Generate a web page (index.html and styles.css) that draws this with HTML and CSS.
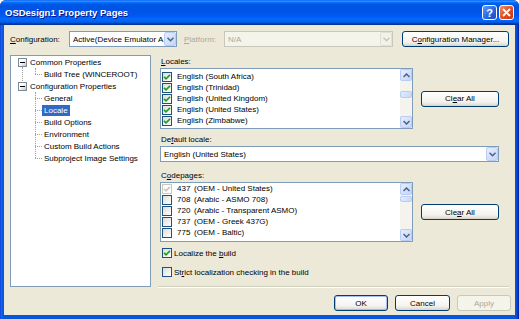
FILE: index.html
```html
<!DOCTYPE html>
<html lang="en">
<head>
    <meta charset="UTF-8">
    <title>OSDesign1 Property Pages</title>
    <link rel="stylesheet" href="styles.css">
</head>
<body>
    <div class="window">
        <div class="titlebar">
            <span class="title">OSDesign1 Property Pages</span>
            <div class="caption-btns">
                <span class="cap-btn help">?</span>
                <span class="cap-btn close">
                    <svg width="9" height="9" viewBox="0 0 9 9"><path d="M1 1 L8 8 M8 1 L1 8" stroke="#fff" stroke-width="1.8"/></svg>
                </span>
            </div>
        </div>

        <div class="client">
            <div class="config-row">
                <span class="lbl cfg-lbl"><u>C</u>onfiguration:</span>
                <div class="combo cfg-combo">
                    <span class="combo-text">Active(Device Emulator A</span>
                    <span class="combo-arrow"><svg width="7" height="5" viewBox="0 0 7 5"><path d="M0.5 0.8 L3.5 3.8 L6.5 0.8" fill="none" stroke="#4D6185" stroke-width="1.5"/></svg></span>
                </div>
                <span class="lbl plat-lbl disabled"><u>P</u>latform:</span>
                <div class="combo plat-combo disabled">
                    <span class="combo-text">N/A</span>
                    <span class="combo-arrow"><svg width="7" height="5" viewBox="0 0 7 5"><path d="M0.5 0.8 L3.5 3.8 L6.5 0.8" fill="none" stroke="#C9C7BA" stroke-width="1.5"/></svg></span>
                </div>
                <button class="btn mgr-btn">C<u>o</u>nfiguration Manager...</button>
            </div>

            <div class="main">
                <ul class="tree">
                    <li class="node first">
                        <div class="row root"><span class="expander"></span><span class="item">Common Properties</span></div>
                        <ul class="children">
                            <li class="row child"><span class="stub"></span><span class="item">Build Tree (WINCEROOT)</span></li>
                        </ul>
                    </li>
                    <li class="node">
                        <div class="row root"><span class="expander"></span><span class="item">Configuration Properties</span></div>
                        <ul class="children">
                            <li class="row child"><span class="stub"></span><span class="item">General</span></li>
                            <li class="row child"><span class="stub"></span><span class="item selected">Locale</span></li>
                            <li class="row child"><span class="stub"></span><span class="item">Build Options</span></li>
                            <li class="row child"><span class="stub"></span><span class="item">Environment</span></li>
                            <li class="row child"><span class="stub"></span><span class="item">Custom Build Actions</span></li>
                            <li class="row child"><span class="stub"></span><span class="item">Subproject Image Settings</span></li>
                        </ul>
                    </li>
                </ul>

                <div class="pane">
                    <div class="pane-body">
                        <div class="field-lbl locales-lbl"><u>L</u>ocales:</div>
                        <div class="list-row">
                            <div class="listbox">
                                <ul class="list-items">
                                    <li class="list-item"><span class="check"><svg width="8" height="8" viewBox="0 0 8 8"><path d="M1 3.8 L3 5.8 L7 1.8" fill="none" stroke="#21A121" stroke-width="1.7"/></svg></span>English (South Africa)</li>
                                    <li class="list-item"><span class="check"><svg width="8" height="8" viewBox="0 0 8 8"><path d="M1 3.8 L3 5.8 L7 1.8" fill="none" stroke="#21A121" stroke-width="1.7"/></svg></span>English (Trinidad)</li>
                                    <li class="list-item"><span class="check"><svg width="8" height="8" viewBox="0 0 8 8"><path d="M1 3.8 L3 5.8 L7 1.8" fill="none" stroke="#21A121" stroke-width="1.7"/></svg></span>English (United Kingdom)</li>
                                    <li class="list-item"><span class="check"><svg width="8" height="8" viewBox="0 0 8 8"><path d="M1 3.8 L3 5.8 L7 1.8" fill="none" stroke="#21A121" stroke-width="1.7"/></svg></span>English (United States)</li>
                                    <li class="list-item"><span class="check"><svg width="8" height="8" viewBox="0 0 8 8"><path d="M1 3.8 L3 5.8 L7 1.8" fill="none" stroke="#21A121" stroke-width="1.7"/></svg></span>English (Zimbabwe)</li>
                                </ul>
                                <div class="scrollbar">
                                    <span class="sb-btn"><svg width="7" height="5" viewBox="0 0 7 5"><path d="M0.5 4 L3.5 1 L6.5 4" fill="none" stroke="#4D6185" stroke-width="1.5"/></svg></span>
                                    <div class="sb-track"><span class="sb-thumb thumb-mid"></span></div>
                                    <span class="sb-btn"><svg width="7" height="5" viewBox="0 0 7 5"><path d="M0.5 1 L3.5 4 L6.5 1" fill="none" stroke="#4D6185" stroke-width="1.5"/></svg></span>
                                </div>
                            </div>
                            <button class="btn clear-btn">Cl<u>e</u>ar All</button>
                        </div>

                        <div class="field-lbl default-lbl">De<u>f</u>ault locale:</div>
                        <div class="combo locale-combo">
                            <span class="combo-text">English (United States)</span>
                            <span class="combo-arrow"><svg width="7" height="5" viewBox="0 0 7 5"><path d="M0.5 0.8 L3.5 3.8 L6.5 0.8" fill="none" stroke="#4D6185" stroke-width="1.5"/></svg></span>
                        </div>

                        <div class="field-lbl codepages-lbl">C<u>o</u>depages:</div>
                        <div class="list-row">
                            <div class="listbox codepages">
                                <ul class="list-items">
                                    <li class="list-item"><span class="check disabled"><svg width="8" height="8" viewBox="0 0 8 8"><path d="M1 3.8 L3 5.8 L7 1.8" fill="none" stroke="#C9C7BA" stroke-width="1.7"/></svg></span><span class="cp-num">437</span>(OEM - United States)</li>
                                    <li class="list-item"><span class="check"></span><span class="cp-num">708</span>(Arabic - ASMO 708)</li>
                                    <li class="list-item"><span class="check"></span><span class="cp-num">720</span>(Arabic - Transparent ASMO)</li>
                                    <li class="list-item"><span class="check"></span><span class="cp-num">737</span>(OEM - Greek 437G)</li>
                                    <li class="list-item"><span class="check"></span><span class="cp-num">775</span>(OEM - Baltic)</li>
                                </ul>
                                <div class="scrollbar">
                                    <span class="sb-btn"><svg width="7" height="5" viewBox="0 0 7 5"><path d="M0.5 4 L3.5 1 L6.5 4" fill="none" stroke="#4D6185" stroke-width="1.5"/></svg></span>
                                    <div class="sb-track"><span class="sb-thumb thumb-top"></span></div>
                                    <span class="sb-btn"><svg width="7" height="5" viewBox="0 0 7 5"><path d="M0.5 1 L3.5 4 L6.5 1" fill="none" stroke="#4D6185" stroke-width="1.5"/></svg></span>
                                </div>
                            </div>
                            <button class="btn clear-btn">Cle<u>a</u>r All</button>
                        </div>

                        <div class="check-row localize-row">
                            <span class="check"><svg width="8" height="8" viewBox="0 0 8 8"><path d="M1 3.8 L3 5.8 L7 1.8" fill="none" stroke="#21A121" stroke-width="1.7"/></svg></span>
                            <span>Localize the <u>b</u>uild</span>
                        </div>
                        <div class="check-row strict-row">
                            <span class="check"></span>
                            <span>St<u>r</u>ict localization checking in the build</span>
                        </div>
                    </div>
                    <div class="sep"></div>
                </div>
            </div>

            <div class="buttons">
                <button class="btn default">OK</button>
                <button class="btn">Cancel</button>
                <button class="btn disabled">Apply</button>
            </div>
        </div>
    </div>
</body>
</html>
```

FILE: styles.css
```css
html, body {
    margin: 0;
    padding: 0;
}

body {
    width: 519px;
    height: 319px;
    overflow: hidden;
    background: #fff;
    font-family: "Liberation Sans", Arial, sans-serif;
    font-size: 8px;
    color: #000;
}

button {
    font-family: inherit;
    font-size: inherit;
    padding: 0;
}

.window {
    width: 519px;
    height: 319px;
    display: flex;
    flex-direction: column;
    border-radius: 6px 6px 0 0;
    overflow: hidden;
    background: linear-gradient(to right, #0831D9 0, #166AEE 1px, #0855DD 3px, #0855DD 515px, #0A45D0 517px, #001EA0 519px);
}

/* title bar */
.titlebar {
    height: 25px;
    flex: none;
    display: flex;
    align-items: center;
    padding: 0 5px;
    background: linear-gradient(#0058EE 0%, #3593FF 4%, #288EFF 6%, #127DFF 8%, #036FFC 10%, #0262EE 14%, #0057E5 20%, #0054E3 24%, #0055EB 56%, #005BF5 66%, #026AFE 76%, #0062EF 86%, #0052D6 92%, #0040AB 94%, #003092 100%);
}

.title {
    color: #fff;
    font-weight: bold;
    font-size: 9.5px;
    text-shadow: 1px 1px 0 #0A1883;
}

.caption-btns {
    margin-left: auto;
    display: flex;
    gap: 2px;
}

.cap-btn {
    width: 15px;
    height: 15px;
    box-sizing: border-box;
    border: 1px solid #fff;
    border-radius: 3px;
    display: flex;
    align-items: center;
    justify-content: center;
    color: #fff;
    font-weight: bold;
    font-size: 11px;
}

.help {
    background: linear-gradient(135deg, #5E9BFB, #2663E0 60%, #1848C8);
}

.close {
    background: linear-gradient(135deg, #F0905E, #E0502A 50%, #C23A10);
}

/* client area */
.client {
    flex: 1;
    margin: 0 4px 4px 4px;
    padding: 6px 6px 0 6px;
    background: #ECE9D8;
    display: flex;
    flex-direction: column;
}

.config-row {
    display: flex;
    align-items: center;
    height: 16px;
}

.lbl {
    white-space: nowrap;
}

.cfg-lbl {
    width: 59px;
}

.plat-lbl {
    width: 40px;
    margin-left: 7px;
}

.disabled {
    color: #ACA899;
}

.combo {
    height: 16px;
    box-sizing: border-box;
    border: 1px solid #7F9DB9;
    background: #fff;
    display: flex;
    align-items: center;
}

.combo-text {
    flex: 1;
    padding-left: 3px;
    white-space: nowrap;
    overflow: hidden;
}

.combo-arrow {
    width: 12px;
    height: 14px;
    box-sizing: border-box;
    flex: none;
    border: 1px solid #B9CCF5;
    border-radius: 2px;
    background: linear-gradient(135deg, #E6EEFD, #C5D6FB);
    display: flex;
    align-items: center;
    justify-content: center;
}

.cfg-combo {
    width: 108px;
}

.plat-combo {
    width: 169px;
    border-color: #C9C7BA;
    background: #F5F4EA;
}

.plat-combo .combo-arrow {
    border-color: #E2E0D6;
    background: #F2F1EA;
}

.btn {
    height: 16px;
    box-sizing: border-box;
    border: 1px solid #003C74;
    border-radius: 3px;
    background: linear-gradient(#FFFFFF, #F4F3EE 70%, #E3E0D6 90%, #D6D0C5);
    color: #000;
    white-space: nowrap;
}

.btn.default {
    box-shadow: inset 0 0 0 1px #A7BEF2;
}

.btn.disabled {
    border-color: #C9C7BA;
    background: #F5F4EA;
    color: #ACA899;
}

.mgr-btn {
    margin-left: auto;
    width: 107px;
}

/* main area */
.main {
    display: flex;
    height: 233px;
    margin-top: 8px;
}

.tree,
.tree ul {
    list-style: none;
    margin: 0;
    padding: 0;
}

.tree {
    width: 141px;
    height: 232px;
    box-sizing: border-box;
    border: 1px solid #7F9DB9;
    background: #fff;
}

.node.first {
    position: relative;
}

.node.first::before {
    content: "";
    position: absolute;
    left: 11px;
    top: 11px;
    height: 14px;
    border-left: 1px dotted #A0A0A0;
}

.row {
    display: flex;
    align-items: center;
    height: 12px;
    white-space: nowrap;
}

.root {
    padding-left: 7px;
}

.expander {
    width: 9px;
    height: 9px;
    box-sizing: border-box;
    border: 1px solid #7A8A99;
    background: linear-gradient(135deg, #fff 40%, #C9C6B8);
    margin-right: 1px;
    display: flex;
    align-items: center;
    justify-content: center;
}

.expander::after {
    content: "";
    width: 5px;
    height: 1px;
    background: #000;
}

.item {
    padding: 0 2px;
    height: 11px;
    line-height: 11px;
}

.item.selected {
    background: #316AC5;
    color: #fff;
}

.children {
    position: relative;
}

.children::before {
    content: "";
    position: absolute;
    left: 24px;
    top: 0;
    bottom: 6px;
    border-left: 1px dotted #A0A0A0;
}

.child {
    padding-left: 24px;
}

.stub {
    width: 7px;
    border-top: 1px dotted #A0A0A0;
}

/* right pane */
.pane {
    flex: 1;
    margin-left: 7px;
    display: flex;
    flex-direction: column;
}

.pane-body {
    flex: 1;
    padding: 0 10px 0 2px;
}

.field-lbl {
    padding-left: 1px;
    white-space: nowrap;
}

.locales-lbl {
    height: 13px;
    line-height: 13px;
}

.default-lbl {
    margin-top: 4px;
    height: 13px;
    line-height: 13px;
}

.codepages-lbl {
    margin-top: 8px;
    height: 12px;
    line-height: 12px;
}

.list-row {
    display: flex;
    align-items: center;
}

.listbox {
    width: 253px;
    height: 61px;
    box-sizing: border-box;
    border: 1px solid #7F9DB9;
    background: #fff;
    display: flex;
}

.listbox.codepages {
    height: 60px;
}

.list-items {
    flex: 1;
    list-style: none;
    margin: 0;
    padding: 2px 0 0 1px;
    overflow: hidden;
}

.codepages .list-items {
    padding-top: 0;
}

.list-item {
    display: flex;
    align-items: center;
    height: 11px;
    white-space: nowrap;
}

.check {
    width: 10px;
    height: 10px;
    box-sizing: border-box;
    flex: none;
    border: 1px solid #1C5180;
    background: linear-gradient(135deg, #DCDCD7, #fff);
    margin-right: 5px;
    display: flex;
    align-items: center;
    justify-content: center;
}

.check.disabled {
    border-color: #CAC8BB;
    background: #fff;
}

.cp-num {
    width: 17px;
    flex: none;
}

.scrollbar {
    width: 12px;
    flex: none;
    display: flex;
    flex-direction: column;
    background: #F4F3EE;
}

.sb-btn,
.sb-thumb {
    display: flex;
    align-items: center;
    justify-content: center;
    box-sizing: border-box;
    border: 1px solid #B9CCF5;
    border-radius: 2px;
    background: linear-gradient(135deg, #E6EEFD, #C5D6FB);
}

.sb-btn {
    height: 12px;
}

.sb-track {
    flex: 1;
}

.sb-thumb {
    height: 7px;
}

.thumb-mid {
    margin-top: 10px;
}

.thumb-top {
    margin-top: 1px;
    height: 6px;
}

.clear-btn {
    margin-left: auto;
    width: 78px;
}

.locale-combo {
    margin-top: 0;
}

.check-row {
    display: flex;
    align-items: center;
    height: 12px;
    margin-left: 2px;
    white-space: nowrap;
}

.check-row .check {
    margin-right: 2px;
}

.localize-row {
    margin-top: 5px;
}

.strict-row {
    margin-top: 7px;
}

.sep {
    height: 0;
    border-top: 1px solid #D0D0BF;
    border-bottom: 1px solid #fff;
}

/* dialog buttons */
.buttons {
    display: flex;
    justify-content: flex-end;
    gap: 7px;
    margin-top: 7px;
    margin-right: -2px;
}

.buttons .btn {
    width: 54px;
}

.buttons .btn:nth-child(2) {
    width: 55px;
}
```
